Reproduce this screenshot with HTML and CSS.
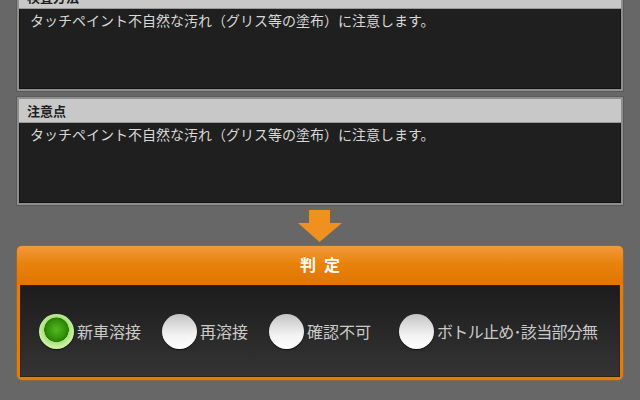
FILE: index.html
```html
<!DOCTYPE html>
<html lang="ja">
<head>
    <meta charset="UTF-8">
    <title>判定</title>
    <link rel="stylesheet" href="styles.css">
</head>
<body>
    <div class="page">
        <div class="box first">
            <div class="box-head">検査方法</div>
            <div class="box-body">タッチペイント不自然な汚れ（グリス等の塗布）に注意します。</div>
        </div>
        <div class="box">
            <div class="box-head">注意点</div>
            <div class="box-body">タッチペイント不自然な汚れ（グリス等の塗布）に注意します。</div>
        </div>
        <div class="arrow">
            <svg width="46" height="33" viewBox="0 0 46 33">
                <path d="M12 0 H33 V13 H45 L22.5 32 L1 13 H12 Z" fill="#f0901e"/>
            </svg>
        </div>
        <div class="judge">
            <div class="judge-head">判定</div>
            <div class="judge-body">
                <label class="opt"><span class="radio on"></span>新車溶接</label>
                <label class="opt"><span class="radio"></span>再溶接</label>
                <label class="opt"><span class="radio"></span>確認不可</label>
                <label class="opt last"><span class="radio"></span>ボトル止め･該当部分無</label>
            </div>
        </div>
    </div>
</body>
</html>
```

FILE: styles.css
```css
* {
    margin: 0;
    padding: 0;
    box-sizing: border-box;
}
body {
    background: #676767;
    font-family: "Noto Sans CJK JP", sans-serif;
    width: 640px;
    height: 400px;
    overflow: hidden;
}
.page {
    padding: 0 17px;
}
.box {
    border: 2px solid #8e8e8e;
    background: #1f1f1f;
    margin-top: 6px;
    box-shadow: 0 0 0 1px #5a5a5a;
}
.box.first {
    margin-top: -17px;
}
.box-head {
    height: 24px;
    line-height: 24px;
    background: #c8c8c8;
    color: #1e1e1e;
    font-size: 13px;
    font-weight: bold;
    padding-left: 8px;
    border-bottom: 1px solid #9a9a9a;
}
.box-body {
    height: 80px;
    padding: 1px 10px;
    color: #d8d8d8;
    font-size: 14px;
    line-height: 20px;
    border: 1px solid #111;
    border-top: 0;
}
.arrow {
    display: flex;
    justify-content: center;
    padding-top: 5px;
    height: 41px;
}
.judge {
    border-radius: 5px;
    background: #e57c06;
    padding: 0 3px 3px;
    box-shadow: 0 0 0 1px #8a6a40;
}
.judge-head {
    height: 39px;
    line-height: 37px;
    text-align: center;
    color: #fff;
    font-size: 16px;
    font-weight: bold;
    letter-spacing: 8px;
    text-indent: 8px;
    background: linear-gradient(#f29a3c, #e8820c 45%, #e07600);
    margin: 0 -3px;
    border-radius: 5px 5px 0 0;
}
.judge-body {
    height: 92px;
    background: linear-gradient(#1c1c1c, #343434);
    border: 1px solid #3a2208;
    display: flex;
    align-items: center;
    padding-left: 18px;
    gap: 21px;
}
.opt {
    display: flex;
    align-items: center;
    gap: 3px;
    color: #cacaca;
    font-size: 16px;
}
.opt.last {
    margin-left: 7px;
    letter-spacing: -0.7px;
}
.radio {
    width: 35px;
    height: 35px;
    border-radius: 50%;
    background: linear-gradient(#c4c4c4, #f2f2f2 60%, #ffffff);
    box-shadow: 0 1px 1px #111;
}
.radio.on {
    background: radial-gradient(circle at 50% 45%, #56b81e 0, #2f8d08 10px, #2a7a06 12px, #a6e07a 12.5px, #c8f0a0 17px);
}
```
